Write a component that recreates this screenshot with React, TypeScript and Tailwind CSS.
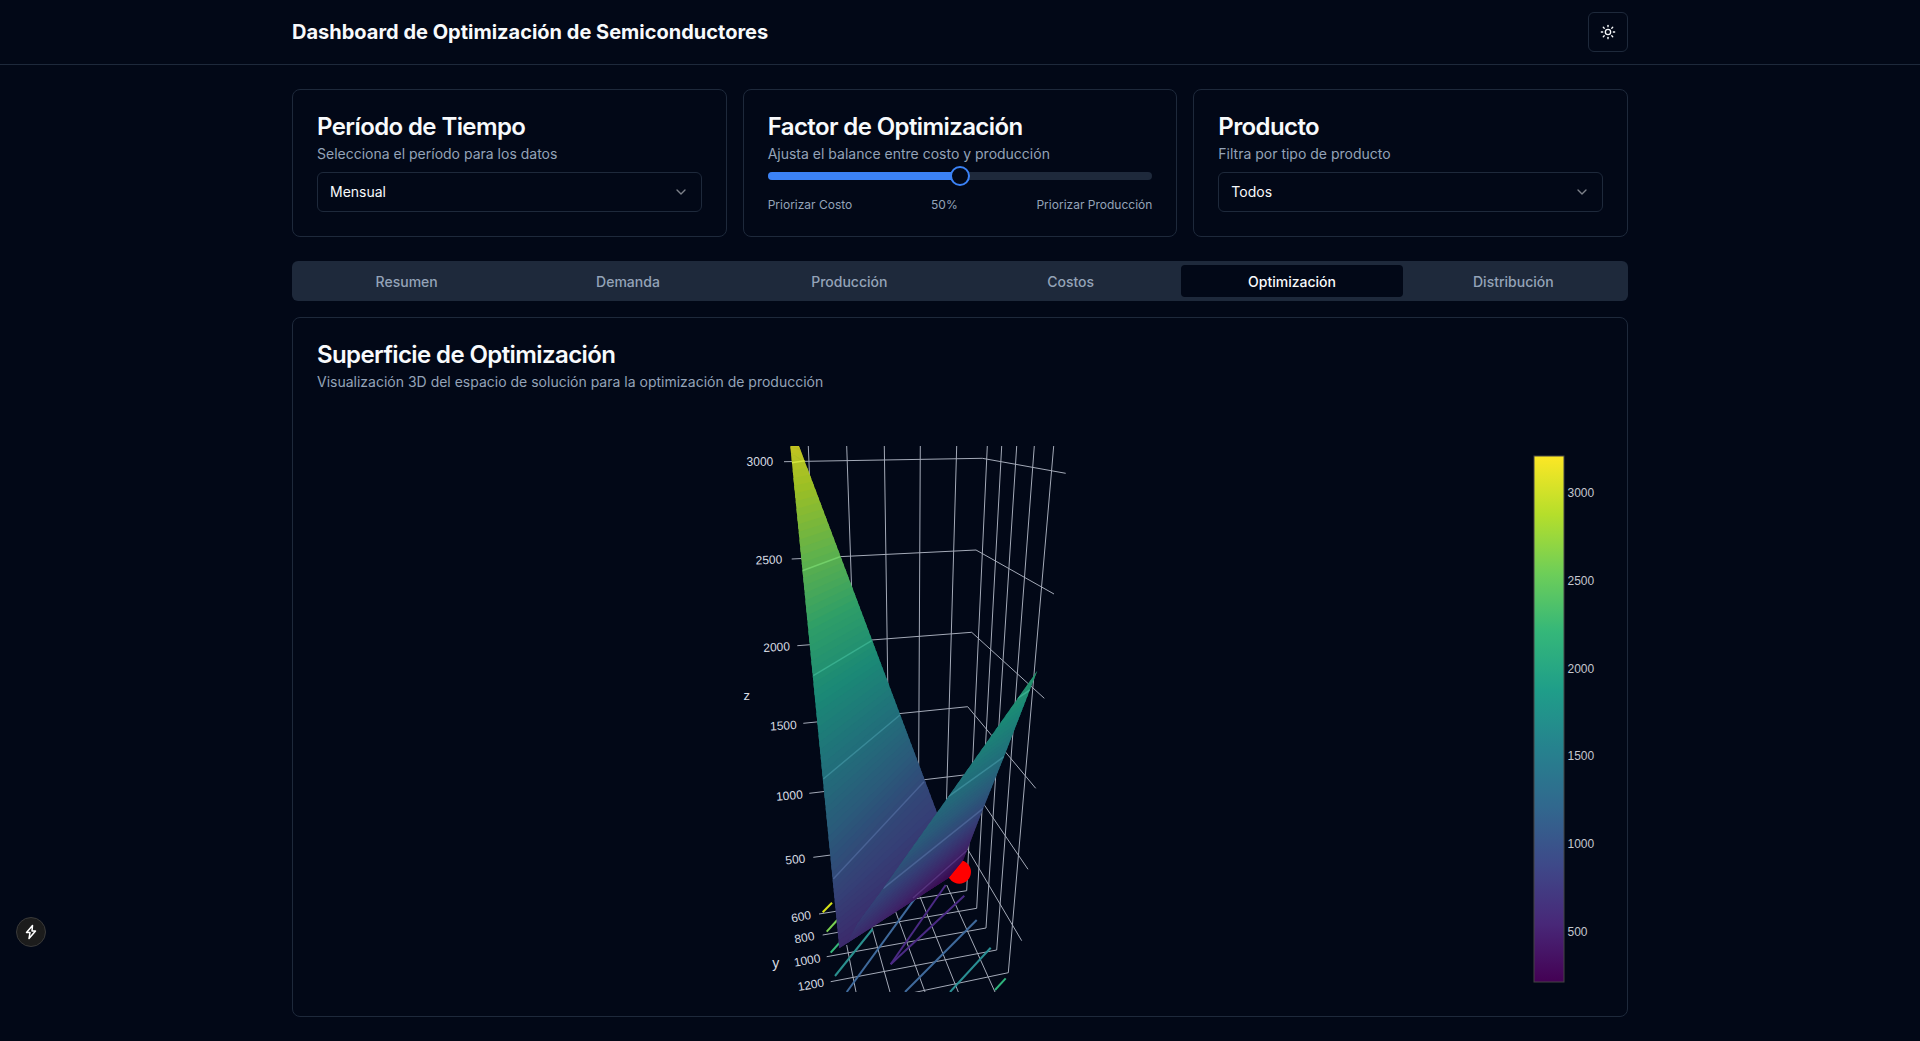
import { ChevronDown, Sun } from "lucide-react";

type Pt = [number, number];
type Contour = { z: number; a: Pt; b: Pt; line?: [Pt, Pt] };

const VIRIDIS = ["#440154", "#482878", "#3e4989", "#31688e", "#26828e", "#1f9e89", "#35b779", "#6ece58", "#b5de2b", "#fde725"];
const Z_MIN = 215;
const Z_MAX = 3211;

const hexToRgb = (hex: string) => [1, 3, 5].map((i) => parseInt(hex.slice(i, i + 2), 16));

function viridis(z: number, shade = 1, lighten = 0) {
  const t = Math.min(1, Math.max(0, (z - Z_MIN) / (Z_MAX - Z_MIN))) * (VIRIDIS.length - 1);
  const i = Math.min(VIRIDIS.length - 2, Math.floor(t));
  const c1 = hexToRgb(VIRIDIS[i]);
  const c2 = hexToRgb(VIRIDIS[i + 1]);
  const rgb = c1.map((v, k) => {
    const mixed = (v + (c2[k] - v) * (t - i)) * shade;
    return Math.round(mixed + (255 - mixed) * lighten);
  });
  return `rgb(${rgb.join(",")})`;
}

const lerp = (p: Pt, q: Pt, t: number): Pt => [p[0] + (q[0] - p[0]) * t, p[1] + (q[1] - p[1]) * t];
const pts = (list: Pt[]) => list.map((p) => p.join(",")).join(" ");

const LEFT_OUTLINE: Pt[] = [[790.3, 446], [799, 446], [936.7, 811.7], [963, 860], [948.5, 878], [839.3, 948.3]];
const LEFT_SHEET: Contour[] = [
  { z: 3100, a: [785, 446], b: [805, 446] },
  { z: 3000, a: [788, 463.2], b: [810, 460], line: [[791.5, 462.7], [805, 460.7]] },
  { z: 2500, a: [796, 573], b: [845, 555], line: [[802.3, 570.7], [840, 556.7]] },
  { z: 2000, a: [806, 680], b: [878, 637], line: [[813.3, 675.7], [871.7, 640.7]] },
  { z: 1500, a: [816, 785], b: [906, 710], line: [[823.3, 779], [900, 715]] },
  { z: 1000, a: [826, 887], b: [932, 773], line: [[833.3, 879], [924, 781.7]] },
  { z: 620, a: [832, 956], b: [972, 860] },
];

const RIGHT_OUTLINE: Pt[] = [[1037.3, 670.7], [1004, 756.7], [983.3, 808.3], [963.3, 860], [948.5, 878], [839.3, 948.3], [883.3, 888.3], [948.3, 796.7]];
const RIGHT_SHEET: Contour[] = [
  { z: 2100, a: [1030, 672], b: [1045, 665] },
  { z: 2000, a: [1012, 702], b: [1035, 686.5], line: [[1017.3, 698.3], [1030, 690]] },
  { z: 1500, a: [940, 802.5], b: [1012, 751], line: [[948.3, 796.7], [1004, 756.7]] },
  { z: 1000, a: [870, 899], b: [990, 802.5], line: [[883.3, 888.3], [983.3, 808.3]] },
  { z: 500, a: [836, 965], b: [972, 846], line: [[913, 898], [966.7, 850.7]] },
  { z: 300, a: [830, 985], b: [985, 845] },
];

// back and side wall verticals
const WALL_LINES: [Pt, Pt][] = [
  [[808.3, 446], [810.5, 500]],
  [[846.7, 446], [852, 600]],
  [[884.3, 446], [888, 700]],
  [[920.3, 446], [918.5, 800]],
  [[956.7, 446], [946.5, 800]],
  [[987.3, 446], [966.7, 890.7]],
  [[1001.7, 446], [976.7, 908.3]],
  [[1016.7, 446], [986, 928]],
  [[1034.3, 446], [996.7, 950]],
  [[1053.7, 446], [1008.3, 972.7]],
];

// z grid: tick end, corner, far end
const Z_LINES: [Pt, Pt, Pt][] = [
  [[784, 461.7], [982.3, 458.3], [1065.7, 473.3]],
  [[791.7, 559], [976, 550], [1054, 594]],
  [[797.3, 645.7], [971.7, 632.3], [1044.3, 698.3]],
  [[803.3, 723.3], [967.7, 706.7], [1035.7, 788.3]],
  [[809.3, 793.3], [964, 775], [1028, 869.3]],
  [[813.3, 857.3], [961, 838], [1021.7, 940.7]],
];

const FLOOR_LINES: [Pt, Pt][] = [
  [[819, 914], [966.7, 890.7]],
  [[822.7, 935], [976.7, 908.3]],
  [[826.7, 956.7], [986, 928]],
  [[830.7, 981.7], [996.7, 950]],
  [[836, 1009], [1008.3, 972.7]],
  [[920, 896.7], [958.3, 992]],
  [[946.7, 885], [995, 992]],
  [[895, 910], [925, 992]],
  [[871.7, 926.7], [890, 992]],
  [[846.7, 945], [856, 992]],
];

const FLOOR_CONTOURS: { from: Pt; to: Pt; color: string }[] = [
  { from: [822.7, 912.3], to: [832, 902.7], color: "#d7e219" },
  { from: [826.7, 931.7], to: [837.3, 920], color: "#7ad151" },
  { from: [830.7, 952.7], to: [839.3, 943], color: "#35b779" },
  { from: [835, 976], to: [872.7, 929], color: "#2a8f8e" },
  { from: [846.7, 992], to: [915, 898.3], color: "#3f6a9c" },
  { from: [890.7, 964.3], to: [945.7, 885], color: "#4b2a85" },
  { from: [890.7, 964.3], to: [964.3, 895.7], color: "#4b2a85" },
  { from: [905, 992], to: [976.7, 920], color: "#3f6a9c" },
  { from: [950, 992], to: [990.7, 947.7], color: "#2a8f94" },
  { from: [995, 990], to: [1005.7, 978.3], color: "#2fb47c" },
];

const TICK_LABELS: { text: string; x: number; y: number; angle: number }[] = [
  { text: "3000", x: 773.3, y: 462, angle: 0 },
  { text: "2500", x: 782.3, y: 559.5, angle: -2 },
  { text: "2000", x: 790, y: 646.5, angle: -3 },
  { text: "1500", x: 796.7, y: 725, angle: -3 },
  { text: "1000", x: 802.7, y: 794.5, angle: -5 },
  { text: "500", x: 805.3, y: 858.5, angle: -6 },
  { text: "600", x: 811, y: 915, angle: -10 },
  { text: "800", x: 814.3, y: 936, angle: -10 },
  { text: "1000", x: 820.3, y: 958.2, angle: -10 },
  { text: "1200", x: 824, y: 982.5, angle: -10 },
];

const COLORBAR_TICKS = [
  { text: "3000", y: 493 },
  { text: "2500", y: 581 },
  { text: "2000", y: 669 },
  { text: "1500", y: 756 },
  { text: "1000", y: 844 },
  { text: "500", y: 932 },
];

function Sheet({ id, outline, contours }: { id: string; outline: Pt[]; contours: Contour[] }) {
  const bands: { points: Pt[]; z: number }[] = [];
  contours.slice(0, -1).forEach((c, i) => {
    const next = contours[i + 1];
    const steps = 14;
    for (let s = 0; s < steps; s++) {
      const t1 = s / steps;
      // run each band a little past its end so no seam shows under the next one
      const t2 = (s + 1.6) / steps;
      bands.push({
        z: c.z + (next.z - c.z) * ((s + 0.5) / steps),
        points: [lerp(c.a, next.a, t1), lerp(c.b, next.b, t1), lerp(c.b, next.b, t2), lerp(c.a, next.a, t2)],
      });
    }
  });
  return (
    <g>
      <clipPath id={id}>
        <polygon points={pts(outline)} />
      </clipPath>
      <g clipPath={`url(#${id})`}>
        {bands.map((b, i) => (
          <polygon key={i} points={pts(b.points)} fill={viridis(b.z, 0.86)} />
        ))}
        {contours.map((c) =>
          c.line ? (
            <line key={c.z} x1={c.line[0][0]} y1={c.line[0][1]} x2={c.line[1][0]} y2={c.line[1][1]} stroke={viridis(c.z, 1, 0.08)} strokeWidth={1.5} />
          ) : null
        )}
      </g>
    </g>
  );
}

function SurfaceChart() {
  return (
    <svg viewBox="317 392 1286 600" className="block h-[600px] w-full overflow-visible" fontFamily="'Liberation Sans', Arial, sans-serif">
      <defs>
        <clipPath id="scene">
          <rect x={317} y={446} width={1000} height={546} />
        </clipPath>
        <linearGradient id="colorbar" x1="0" y1="1" x2="0" y2="0">
          {VIRIDIS.map((c, i) => (
            <stop key={c} offset={i / (VIRIDIS.length - 1)} stopColor={c} />
          ))}
        </linearGradient>
      </defs>

      <g clipPath="url(#scene)">
        <g stroke="#a4aab8" strokeWidth={1} fill="none">
          {WALL_LINES.map(([p, q], i) => (
            <line key={i} x1={p[0]} y1={p[1]} x2={q[0]} y2={q[1]} />
          ))}
          {Z_LINES.map((l, i) => (
            <polyline key={i} points={pts(l)} />
          ))}
          {FLOOR_LINES.map(([p, q], i) => (
            <line key={i} x1={p[0]} y1={p[1]} x2={q[0]} y2={q[1]} />
          ))}
        </g>
        {FLOOR_CONTOURS.map((c, i) => (
          <line key={i} x1={c.from[0]} y1={c.from[1]} x2={c.to[0]} y2={c.to[1]} stroke={c.color} strokeWidth={2} />
        ))}
        <circle cx={959.3} cy={872} r={11.7} fill="#ff0000" />
        <Sheet id="left-sheet" outline={LEFT_OUTLINE} contours={LEFT_SHEET} />
        <Sheet id="right-sheet" outline={RIGHT_OUTLINE} contours={RIGHT_SHEET} />
      </g>

      <g fill="#d8dce3" fontSize={12}>
        {TICK_LABELS.map((t) => (
          <text key={`${t.text}-${t.y}`} x={t.x} y={t.y + 4} textAnchor="end" transform={`rotate(${t.angle} ${t.x} ${t.y})`}>
            {t.text}
          </text>
        ))}
        <text x={746.7} y={700} textAnchor="middle" fontSize={13}>z</text>
        <text x={775.7} y={968} textAnchor="middle" fontSize={14}>y</text>
      </g>

      <rect x={1534} y={456} width={30} height={526} fill="url(#colorbar)" stroke="#444" strokeWidth={1} />
      <g fill="#c4c7ce" fontSize={12}>
        {COLORBAR_TICKS.map((t) => (
          <text key={t.text} x={1567.5} y={t.y + 4}>{t.text}</text>
        ))}
      </g>
    </svg>
  );
}

function SelectBox({ value }: { value: string }) {
  return (
    <button className="flex h-10 w-full items-center justify-between rounded-md border border-[#1e293b] bg-[#020817] px-3 py-2 text-sm text-[#f8fafc]">
      <span>{value}</span>
      <ChevronDown className="h-4 w-4 opacity-50" />
    </button>
  );
}

function FilterCard({ title, description, children }: { title: string; description: string; children: React.ReactNode }) {
  return (
    <div className="rounded-lg border border-[#1e293b] bg-[#020817]">
      <div className="p-6 pb-2">
        <h3 className="pt-px text-2xl leading-none font-semibold tracking-tight text-[#f8fafc]">{title}</h3>
        <p className="mt-[5px] text-sm text-[#94a3b8]">{description}</p>
      </div>
      <div className="px-6 pb-6">{children}</div>
    </div>
  );
}

const TABS = ["Resumen", "Demanda", "Producción", "Costos", "Optimización", "Distribución"];

export default function App() {
  return (
    <div className="min-h-screen bg-[#020817] font-['Inter',sans-serif] text-[#f8fafc]">
      <header className="border-b border-[#1e293b]">
        <div className="mx-auto flex h-16 max-w-[1400px] items-center justify-between px-8">
          <h1 className="text-xl font-bold">Dashboard de Optimización de Semiconductores</h1>
          <button className="flex h-10 w-10 items-center justify-center rounded-md border border-[#1e293b] bg-[#020817]">
            <Sun className="h-4 w-4" />
          </button>
        </div>
      </header>

      <main className="mx-auto max-w-[1400px] px-8 py-6">
        <div className="grid grid-cols-3 gap-4">
          <FilterCard title="Período de Tiempo" description="Selecciona el período para los datos">
            <SelectBox value="Mensual" />
          </FilterCard>

          <FilterCard title="Factor de Optimización" description="Ajusta el balance entre costo y producción">
            <div className="relative h-2 rounded-full bg-[#1e293b]">
              <div className="h-full w-1/2 rounded-l-full bg-[#3b82f6]" />
              <div className="absolute top-1/2 left-1/2 h-5 w-5 -translate-x-1/2 -translate-y-1/2 rounded-full border-2 border-[#3b82f6] bg-[#020817]" />
            </div>
            <div className="mt-[17px] -mb-px flex justify-between text-xs text-[#94a3b8]">
              <span>Priorizar Costo</span>
              <span>50%</span>
              <span>Priorizar Producción</span>
            </div>
          </FilterCard>

          <FilterCard title="Producto" description="Filtra por tipo de producto">
            <SelectBox value="Todos" />
          </FilterCard>
        </div>

        <div className="mt-6 grid h-10 grid-cols-6 items-center rounded-md bg-[#1e293b] p-1 text-sm font-medium">
          {TABS.map((tab) => (
            <button
              key={tab}
              className={tab === "Optimización" ? "h-8 rounded-sm bg-[#020817] pt-0.5 text-[#f8fafc]" : "h-8 rounded-sm pt-0.5 text-[#94a3b8]"}
            >
              {tab}
            </button>
          ))}
        </div>

        <div className="mt-4 rounded-lg border border-[#1e293b] bg-[#020817]">
          <div className="px-6 pt-6">
            <h3 className="pt-px text-2xl leading-none font-semibold tracking-tight">Superficie de Optimización</h3>
            <p className="mt-[5px] text-sm text-[#94a3b8]">Visualización 3D del espacio de solución para la optimización de producción</p>
          </div>
          <div className="px-6 pb-6">
            <SurfaceChart />
          </div>
        </div>
      </main>

      {/* dev tools badge */}
      <div className="fixed bottom-[94px] left-4 flex h-[30px] w-[30px] items-center justify-center rounded-full border border-[#3a3a3a] bg-[#1c1c1c]">
        <svg viewBox="0 0 16 16" className="h-4 w-4" fill="none" stroke="#ffffff" strokeWidth={1.5} strokeLinejoin="round">
          <path d="M9.5 1.5 3.5 8.5H7L6 14.5 12.5 7H9z" />
        </svg>
      </div>
    </div>
  );
}
